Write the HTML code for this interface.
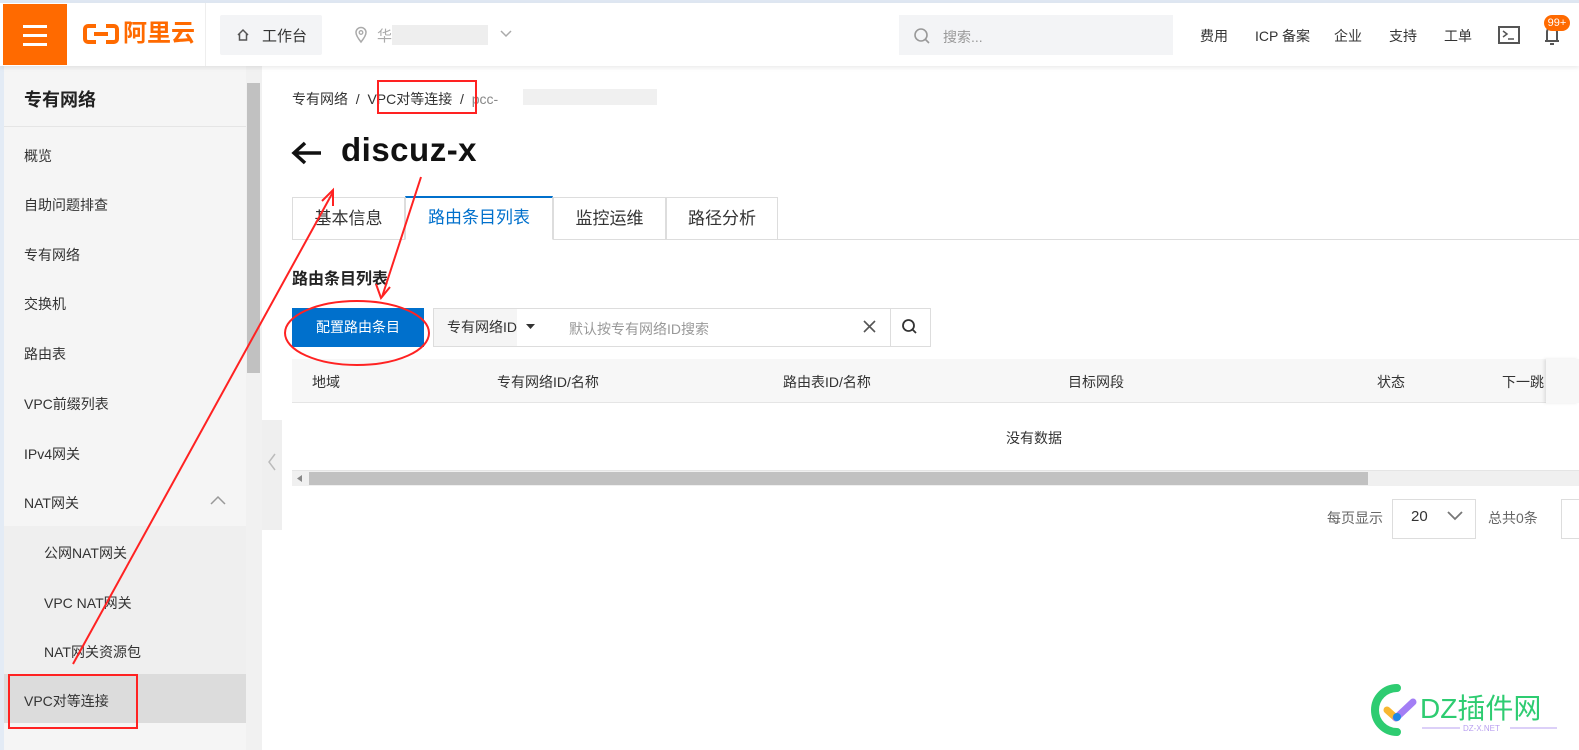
<!DOCTYPE html>
<html><head><meta charset="utf-8"><style>
*{margin:0;padding:0;box-sizing:border-box}
body{width:1579px;height:750px;overflow:hidden;background:#fff;font-family:"Liberation Sans","Noto Sans CJK SC",sans-serif;color:#333;position:relative;font-size:14px}
.a{position:absolute;white-space:nowrap}
.side .a{font-size:14px;color:#333}
</style></head><body>
<div class="a" style="left:0;top:0;width:1579px;height:3px;background:#dfe7f2"></div>
<div class="a" style="left:0;top:3px;width:1579px;height:63px;background:#fff;box-shadow:0 2px 4px rgba(0,0,0,.08);z-index:2">
 <div class="a" style="left:3px;top:1px;width:64px;height:61px;background:#ff6a00">
  <div class="a" style="left:20px;top:21px;width:24px;height:3px;background:#fff"></div>
  <div class="a" style="left:20px;top:30px;width:24px;height:3px;background:#fff"></div>
  <div class="a" style="left:20px;top:39px;width:24px;height:3px;background:#fff"></div>
 </div>
 <div class="a" style="left:83px;top:21px;width:36px;height:20px;border:4px solid #ff6a00;border-radius:5px"></div>
 <div class="a" style="left:96px;top:18px;width:10px;height:27px;background:#fff"></div>
 <div class="a" style="left:94px;top:29px;width:14px;height:4px;background:#ff6a00"></div>
 <div class="a" style="left:123px;top:16px;font-size:24px;font-weight:bold;color:#ff6a00;line-height:30px">阿里云</div>
 <div class="a" style="left:205px;top:0;width:1px;height:63px;background:#eee"></div>
 <div class="a" style="left:220px;top:12px;width:102px;height:40px;background:#f3f4f6;border-radius:2px"></div>
 <svg class="a" style="left:236px;top:25px" width="14" height="14"><path d="M2 7 L7 2 L12 7 M3.5 6 V12 H10.5 V6" fill="none" stroke="#555" stroke-width="1.5"/></svg>
 <div class="a" style="left:262px;top:22px;font-size:15px;color:#333">工作台</div>
 <svg class="a" style="left:354px;top:23px" width="14" height="18"><path d="M7 16 C3 11 2 8 2 6.5 A5 5 0 0 1 12 6.5 C12 8 11 11 7 16Z" fill="none" stroke="#aaa" stroke-width="1.5"/><circle cx="7" cy="6.5" r="1.8" fill="none" stroke="#aaa" stroke-width="1.3"/></svg>
 <div class="a" style="left:377px;top:22px;font-size:15px;color:#aaa">华</div>
 <div class="a" style="left:392px;top:22px;width:96px;height:20px;background:#eee"></div>
 <svg class="a" style="left:500px;top:27px" width="12" height="8"><path d="M1 1 L6 6 L11 1" fill="none" stroke="#aaa" stroke-width="1.5"/></svg>
 <div class="a" style="left:899px;top:12px;width:274px;height:40px;background:#f3f4f6"></div>
 <svg class="a" style="left:913px;top:24px" width="18" height="18"><circle cx="8" cy="8" r="6" fill="none" stroke="#999" stroke-width="1.6"/><line x1="12.5" y1="12.5" x2="16" y2="16" stroke="#999" stroke-width="1.6"/></svg>
 <div class="a" style="left:943px;top:24px;font-size:14px;color:#999">搜索...</div>
 <div class="a" style="left:1200px;top:23px;font-size:14px;color:#333">费用</div>
 <div class="a" style="left:1255px;top:23px;font-size:14px;color:#333">ICP 备案</div>
 <div class="a" style="left:1334px;top:23px;font-size:14px;color:#333">企业</div>
 <div class="a" style="left:1389px;top:23px;font-size:14px;color:#333">支持</div>
 <div class="a" style="left:1444px;top:23px;font-size:14px;color:#333">工单</div>
 <svg class="a" style="left:1498px;top:23px" width="22" height="18"><rect x="1" y="1" width="20" height="16" fill="none" stroke="#555" stroke-width="2"/><path d="M5 5 L9 8 L5 11 M10 13 H16" fill="none" stroke="#555" stroke-width="1.5"/></svg>
 <svg class="a" style="left:1544px;top:22px" width="16" height="22"><path d="M3 16 V7 A5 5 0 0 1 13 7 V16 M1 16 H15 M6 19 H10" fill="none" stroke="#555" stroke-width="2"/></svg>
 <div class="a" style="left:1544px;top:12px;width:26px;height:16px;background:#ff6a00;border-radius:8px;color:#fff;font-size:11px;text-align:center;line-height:16px">99+</div>
</div>
<div class="side">
<div class="a" style="left:0;top:66px;width:4px;height:684px;background:#e3ebf5"></div>
<div class="a" style="left:4px;top:66px;width:242px;height:684px;background:#f5f5f5"></div>
<div class="a" style="left:246px;top:66px;width:16px;height:684px;background:#f1f1f1"></div>
<div class="a" style="left:247px;top:83px;width:13px;height:290px;background:#c1c1c1"></div>
<div class="a" style="left:24px;top:86px;font-size:18px;font-weight:bold;color:#222">专有网络</div>
<div class="a" style="left:4px;top:126px;width:242px;height:1px;background:#e5e5e5"></div>
<div class="a" style="left:24px;top:146px">概览</div>
<div class="a" style="left:24px;top:195px">自助问题排查</div>
<div class="a" style="left:24px;top:245px">专有网络</div>
<div class="a" style="left:24px;top:294px">交换机</div>
<div class="a" style="left:24px;top:344px">路由表</div>
<div class="a" style="left:24px;top:394px">VPC前缀列表</div>
<div class="a" style="left:24px;top:444px">IPv4网关</div>
<div class="a" style="left:24px;top:493px">NAT网关</div>
<svg class="a" style="left:210px;top:495px" width="16" height="10"><path d="M1 9 L8 2 L15 9" fill="none" stroke="#999" stroke-width="1.5"/></svg>
<div class="a" style="left:4px;top:526px;width:242px;height:148px;background:#efefef"></div>
<div class="a" style="left:44px;top:543px">公网NAT网关</div>
<div class="a" style="left:44px;top:593px">VPC NAT网关</div>
<div class="a" style="left:44px;top:642px">NAT网关资源包</div>
<div class="a" style="left:4px;top:674px;width:242px;height:49px;background:#dcdcdc"></div>
<div class="a" style="left:24px;top:691px">VPC对等连接</div>
<div class="a" style="left:8px;top:674px;width:130px;height:55px;border:2px solid #f22"></div>
<div class="a" style="left:262px;top:420px;width:20px;height:110px;background:#efefef"></div>
<svg class="a" style="left:267px;top:453px" width="10" height="18"><path d="M8 1 L2 9 L8 17" fill="none" stroke="#bbb" stroke-width="1.5"/></svg>
</div>
<div class="a" style="left:292px;top:89px;font-size:14px;color:#333">专有网络 &nbsp;/&nbsp; VPC对等连接 &nbsp;/&nbsp; <span style="color:#888">pcc-</span></div>
<div class="a" style="left:523px;top:89px;width:134px;height:16px;background:#f0f0f0"></div>
<div class="a" style="left:377px;top:80px;width:100px;height:34px;border:2px solid #f22"></div>
<svg class="a" style="left:291px;top:140px" width="32" height="26"><path d="M30 13 H4 M14 3 L3 13 L14 23" fill="none" stroke="#111" stroke-width="3.5"/></svg>
<div class="a" style="left:341px;top:131px;font-size:33px;color:#111;font-weight:bold;letter-spacing:0.5px">discuz-x</div>
<div class="a" style="left:292px;top:239px;width:1287px;height:1px;background:#ddd"></div>
<div class="a" style="left:292px;top:197px;width:113px;height:43px;border:1px solid #ddd;text-align:center;line-height:41px;font-size:17px;color:#333">基本信息</div>
<div class="a" style="left:405px;top:196px;width:148px;height:44px;border:1px solid #ddd;border-top:2px solid #0070cc;border-bottom:1px solid #fff;background:#fff;text-align:center;line-height:40px;font-size:17px;color:#0070cc">路由条目列表</div>
<div class="a" style="left:553px;top:197px;width:113px;height:43px;border:1px solid #ddd;text-align:center;line-height:41px;font-size:17px;color:#333">监控运维</div>
<div class="a" style="left:666px;top:197px;width:112px;height:43px;border:1px solid #ddd;text-align:center;line-height:41px;font-size:17px;color:#333">路径分析</div>
<div class="a" style="left:292px;top:265px;font-size:16px;font-weight:bold;color:#222">路由条目列表</div>
<div class="a" style="left:292px;top:308px;width:132px;height:39px;background:#0070cc;color:#fff;text-align:center;line-height:39px;font-size:14px">配置路由条目</div>
<div class="a" style="left:433px;top:308px;width:498px;height:39px;border:1px solid #ddd"></div>
<div class="a" style="left:434px;top:309px;width:83px;height:37px;background:#f5f5f5;line-height:37px;padding-left:13px;font-size:14px;color:#333">专有网络ID</div>
<svg class="a" style="left:526px;top:324px" width="9" height="6"><path d="M0 0 H9 L4.5 5Z" fill="#333"/></svg>
<div class="a" style="left:569px;top:319px;font-size:14px;color:#999">默认按专有网络ID搜索</div>
<svg class="a" style="left:863px;top:320px" width="13" height="13"><path d="M1 1 L12 12 M12 1 L1 12" stroke="#555" stroke-width="1.6"/></svg>
<div class="a" style="left:890px;top:309px;width:1px;height:37px;background:#ddd"></div>
<svg class="a" style="left:901px;top:318px" width="18" height="18"><circle cx="7.5" cy="7.5" r="5.5" fill="none" stroke="#333" stroke-width="1.8"/><line x1="11.5" y1="11.5" x2="15" y2="15" stroke="#333" stroke-width="1.8"/></svg>
<div class="a" style="left:292px;top:359px;width:1287px;height:44px;background:#f7f7f7;border-bottom:1px solid #e5e5e5"></div>
<div class="a" style="left:312px;top:372px;font-size:14px;color:#333">地域</div>
<div class="a" style="left:497px;top:372px;font-size:14px;color:#333">专有网络ID/名称</div>
<div class="a" style="left:783px;top:372px;font-size:14px;color:#333">路由表ID/名称</div>
<div class="a" style="left:1068px;top:372px;font-size:14px;color:#333">目标网段</div>
<div class="a" style="left:1377px;top:372px;font-size:14px;color:#333">状态</div>
<div class="a" style="left:1502px;top:372px;font-size:14px;color:#333;width:44px;overflow:hidden">下一跳</div>
<div class="a" style="left:1546px;top:359px;width:33px;height:44px;background:#f7f7f7;box-shadow:-2px 0 3px rgba(0,0,0,.1)"></div>
<div class="a" style="left:1006px;top:428px;font-size:14px;color:#333">没有数据</div>
<div class="a" style="left:292px;top:470px;width:1287px;height:16px;background:#f0f0f0;border-top:1px solid #e5e5e5"></div>
<div class="a" style="left:309px;top:472px;width:1059px;height:13px;background:#c1c1c1"></div>
<svg class="a" style="left:297px;top:475px" width="5" height="7"><path d="M5 0 V7 L0 3.5Z" fill="#888"/></svg>
<div class="a" style="left:1327px;top:508px;font-size:14px;color:#666">每页显示</div>
<div class="a" style="left:1392px;top:499px;width:84px;height:40px;border:1px solid #ddd"></div>
<div class="a" style="left:1411px;top:508px;font-size:15px;color:#333">20</div>
<svg class="a" style="left:1447px;top:511px" width="16" height="10"><path d="M1 1 L8 8 L15 1" fill="none" stroke="#777" stroke-width="1.8"/></svg>
<div class="a" style="left:1488px;top:508px;font-size:14px;color:#666">总共0条</div>
<div class="a" style="left:1561px;top:499px;width:30px;height:40px;border:1px solid #ddd"></div>
<svg class="a" style="left:1365px;top:680px" width="200" height="60">
<path d="M32 8 A22 22 0 1 0 32 52" fill="none" stroke="#2ecc71" stroke-width="8" stroke-linecap="round"/>
<line x1="22" y1="30" x2="31" y2="38" stroke="#f7b731" stroke-width="7" stroke-linecap="round"/>
<line x1="31" y1="38" x2="48" y2="22" stroke="#a37ef5" stroke-width="7" stroke-linecap="round"/>
<circle cx="32" cy="37" r="4" fill="#1e88e5"/>
<text x="55" y="38" font-size="28" fill="#2ecc71" font-family="Liberation Sans,Noto Sans CJK SC,sans-serif">DZ插件网</text>
<line x1="57" y1="48" x2="95" y2="48" stroke="#b9a0f0"/><line x1="145" y1="48" x2="192" y2="48" stroke="#b9a0f0"/>
<text x="98" y="51" font-size="8" fill="#b9a0f0" font-family="Liberation Sans,sans-serif">DZ-X.NET</text>
</svg>
<svg class="a" style="left:0;top:0;z-index:5" width="1579" height="750">
<g stroke="#f22" stroke-width="2" fill="none">
<line x1="73" y1="664" x2="333" y2="192"/>
<polyline points="322,201 333,190 333,206"/>
<line x1="421" y1="177" x2="382" y2="297"/>
<polyline points="376,284 381,298 390,287"/>
<ellipse cx="357" cy="333" rx="72" ry="32"/>
</g>
</svg>
</body></html>
